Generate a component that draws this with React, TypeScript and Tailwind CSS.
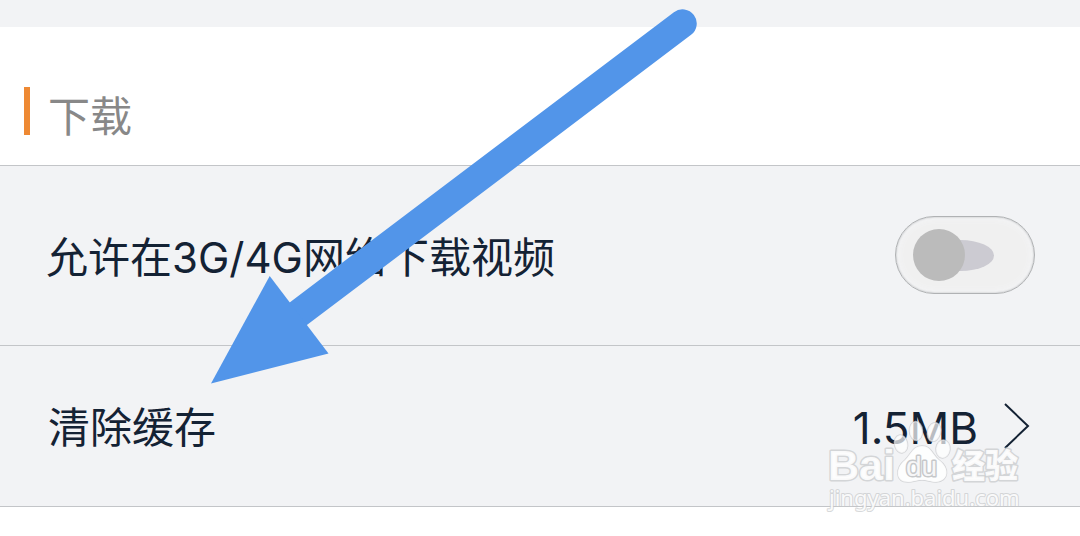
import { useState } from "react";

function Arrow() {
  return (
    <svg
      className="pointer-events-none absolute top-0 left-0 h-[400px] w-[720px]"
      viewBox="0 0 720 400"
      aria-hidden="true"
    >
      <path d="M682.500 23.500 L290 320" stroke="#5295e9" strokeWidth="28.500" strokeLinecap="round" />
      <path d="M211 383.500 L269.700 276 L328.500 353.500 Z" fill="#5295e9" />
    </svg>
  );
}

function Watermark() {
  return (
    <svg
      className="pointer-events-none absolute top-[410px] right-[50px] h-[110px] w-[210px]"
      viewBox="820 410 210 110"
      role="img"
      aria-label="Baidu 经验 jingyan.baidu.com"
    >
      <g
        fill="#ffffff"
        fillOpacity="0.7"
        stroke="#c6c8ca"
        strokeOpacity="0.7"
        strokeWidth="1.500"
        strokeLinejoin="round"
        paintOrder="stroke"
      >
        <ellipse cx="901" cy="444" rx="6.500" ry="9" transform="rotate(-12 901 444)" />
        <ellipse cx="916" cy="431" rx="6.500" ry="9.500" transform="rotate(-4 916 431)" />
        <ellipse cx="934" cy="432" rx="6.500" ry="9.500" transform="rotate(14 934 432)" />
        <ellipse cx="943" cy="449" rx="7" ry="9" transform="rotate(5 943 449)" />
        <path
          fillOpacity="0.85"
          d="M922 446 C931 446 932 454 939 460 C950 468 949 481 936 482 C930 482 928 480 922 480 C916 480 914 482 908 482 C895 482 895 468 905 460 C911 454 913 446 922 446 Z"
        />
        <g fillOpacity="0.9" strokeWidth="3">
          <text x="828" y="480" fontSize="43" fontWeight="700" className="font-['Liberation_Sans',sans-serif]">
            Bai
          </text>
          <text x="952" y="478" fontSize="33" fontWeight="900" className="font-['Noto_Sans_CJK_SC',sans-serif]">
            经验
          </text>
        </g>
        <text
          x="829"
          y="506"
          fontSize="22"
          fillOpacity="0.9"
          strokeWidth="2"
          className="font-['Noto_Sans',sans-serif]"
        >
          jingyan.baidu.com
        </text>
      </g>
      <text
        x="906"
        y="476"
        fontSize="28"
        fill="#f6f6f7"
        stroke="#c6c8ca"
        strokeWidth="3"
        strokeLinejoin="round"
        paintOrder="stroke"
        className="font-['Liberation_Sans',sans-serif]"
      >
        du
      </text>
    </svg>
  );
}

export default function App() {
  const [mobileData, setMobileData] = useState(false);

  return (
    <main className="relative min-h-screen overflow-hidden bg-white pt-[27px] font-['Inter','Noto_Sans_CJK_SC',sans-serif] text-[42px] leading-[60px] text-[#142234] before:absolute before:inset-x-0 before:top-0 before:h-[27px] before:bg-[#f2f3f5]">
      <header className="flex border-b border-[#c3c5c8] px-6 pt-[60px] pb-[18px]">
        <span className="h-12 w-1.5 bg-[#ee8933]" />
        <h2 className="ml-[18px] text-[#888888]">下载</h2>
      </header>

      <section className="bg-[#f2f3f5]">
        <label className="flex h-[180px] cursor-pointer items-center justify-between border-b border-[#c3c5c8] pr-[45px] pb-0.5 pl-[46px]">
          <span className="pt-1.5 whitespace-nowrap">允许在3G/4G网络下载视频</span>
          <span className="relative h-[78px] w-[140px] shrink-0">
            <input
              type="checkbox"
              role="switch"
              checked={mobileData}
              onChange={(e) => setMobileData(e.target.checked)}
              className="peer block size-full cursor-pointer appearance-none rounded-full border border-[#b0b2b4] bg-[#f0f0f0] shadow-[inset_0_0_2px_#b0b2b4,inset_0_0_10px_#f6f7fa]"
            />
            <span className="pointer-events-none absolute top-6 left-8 h-[31px] w-[67px] rounded-[50%] bg-[#cccbd2]" />
            <span className="pointer-events-none absolute top-[13px] left-[18px] size-[52px] rounded-full bg-[#bbbbbb] peer-checked:left-[70px]" />
          </span>
        </label>

        <button
          type="button"
          className="flex h-[161px] w-full cursor-pointer items-center justify-between border-b border-[#c3c5c8] pr-[50px] pl-12"
        >
          <span className="pt-1">清除缓存</span>
          <span className="flex items-center gap-6">
            <span className="pt-1 text-[44px]">1.5MB</span>
            <svg className="h-12 w-7" viewBox="0 0 28 48" fill="none" aria-hidden="true">
              <path d="M3 2 L26 24 L3 46" stroke="#142234" strokeWidth="2" />
            </svg>
          </span>
        </button>
      </section>

      <Watermark />
      <Arrow />
    </main>
  );
}
